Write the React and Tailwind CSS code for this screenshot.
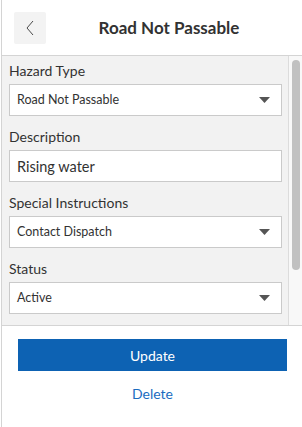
import { useState } from "react";

function Caret() {
  return (
    <svg width="11" height="7" viewBox="0 0 11 7" className="shrink-0">
      <path d="M0 0 H11 L5.5 6 Z" fill="#555" />
    </svg>
  );
}

function SelectBox({ label, value }) {
  return (
    <div className="flex flex-col">
      <label className="text-[14px] leading-[18px] text-[#323232] mb-[4px]">{label}</label>
      <div className="h-[32px] bg-white border border-[#cacaca] flex items-center justify-between pl-[7px] pr-[11px]">
        <span className="text-[12.5px] text-[#323232]">{value}</span>
        <Caret />
      </div>
    </div>
  );
}

export default function App() {
  const [description, setDescription] = useState("Rising water");

  return (
    <div
      className="w-[302px] h-[427px] bg-white flex flex-col ml-[1px] border-l border-[#d4d4d4] overflow-hidden"
      style={{ fontFamily: "Lato, 'Noto Sans', sans-serif" }}
    >
      <div className="h-[56px] flex items-center pl-[12px] border-b border-[#d4d4d4] shrink-0">
        <button className="w-[32px] h-[32px] bg-[#f3f3f3] flex items-center justify-center rounded-[2px]">
          <svg width="10" height="16" viewBox="0 0 10 16">
            <path d="M8 1 L2 8 L8 15" fill="none" stroke="#4a4a4a" strokeWidth="1" />
          </svg>
        </button>
        <h1 className="flex-1 text-center text-[17px] font-bold text-[#323232] pr-[11px]">
          Road Not Passable
        </h1>
      </div>

      <div className="h-[270px] flex border-b border-[#d4d4d4] shrink-0">
        <div className="flex-1 bg-[#f2f2f2] pl-[7px] pr-[6px] pt-[6px] flex flex-col gap-[12px] border-r border-[#dcdcdc]">
          <SelectBox label="Hazard Type" value="Road Not Passable" />
          <div className="flex flex-col">
            <label className="text-[14px] leading-[18px] text-[#323232] mb-[4px]">Description</label>
            <input
              value={description}
              onChange={(e) => setDescription(e.target.value)}
              className="h-[32px] bg-white border border-[#cacaca] px-[7px] text-[14.5px] text-[#323232] outline-none"
            />
          </div>
          <SelectBox label="Special Instructions" value="Contact Dispatch" />
          <SelectBox label="Status" value="Active" />
        </div>
        <div className="w-[14px] bg-[#f8f8f8] flex justify-center pt-[4px]">
          <div className="w-[8px] h-[210px] rounded-full bg-[#c1c1c1]" />
        </div>
      </div>

      <div className="flex flex-col items-center px-[16px] pt-[13px]">
        <button className="w-full h-[32px] bg-[#0d62b3] text-white text-[14px]">Update</button>
        <button className="mt-[6px] h-[32px] text-[#1a6cbf] text-[14px]">Delete</button>
      </div>
    </div>
  );
}
